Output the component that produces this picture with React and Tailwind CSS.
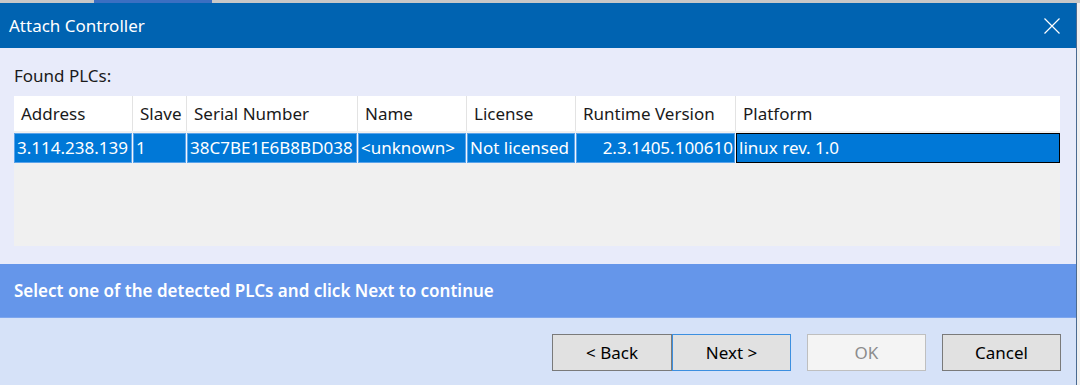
const COLS = [
  { key: "address", label: "Address", w: "w-[118px]" },
  { key: "slave", label: "Slave", w: "w-[53px]" },
  { key: "serial", label: "Serial Number", w: "w-[170px]" },
  { key: "name", label: "Name", w: "w-[108px]" },
  { key: "license", label: "License", w: "w-[108px]" },
  { key: "runtime", label: "Runtime Version", w: "w-[159px]", right: true },
  { key: "platform", label: "Platform", w: "flex-1" },
];

const ROW = {
  address: "3.114.238.139",
  slave: "1",
  serial: "38C7BE1E6B8BD038",
  name: "<unknown>",
  license: "Not licensed",
  runtime: "2.3.1405.100610",
  platform: "linux rev. 1.0",
};

function Button({ children, variant = "default", width = "w-[119px]" }) {
  const styles = {
    default: "bg-[#e1e1e1] border-[#7a7a7a] text-black",
    focus: "bg-[#e1e1e1] border-[#3c8fe0] text-black",
    disabled: "bg-[#f4f4f4] border-[#bfbfbf] text-[#8c8c8c]",
  };
  return (
    <button
      className={`${width} h-[37px] border text-[17px] flex items-center justify-center ${styles[variant]}`}
    >
      {children}
    </button>
  );
}

export default function App() {
  return (
    <div
      className="w-[1080px] h-[385px] bg-[#f0f0f0] overflow-hidden flex flex-col"
      style={{ fontFamily: '"Noto Sans", "Open Sans", sans-serif' }}
    >
      {/* strip of the window behind */}
      <div className="h-[3px] flex shrink-0 bg-[#c8c8c8]">
        <div className="w-[94px]" />
        <div className="w-[118px] bg-[#3b6fc2]" />
      </div>

      <div className="w-[1077px] flex-1 flex flex-col border-r border-[#4a6a90]">
        {/* Title bar */}
        <div className="h-[45px] bg-[#0063b1] flex items-center justify-between pl-[9px] pr-[16px] shrink-0">
          <span className="text-white text-[17px]">Attach Controller</span>
          <svg width="16" height="16" viewBox="0 0 16 16" className="text-white">
            <path d="M0.5 0.5L15.5 15.5M15.5 0.5L0.5 15.5" stroke="currentColor" strokeWidth="1.2" />
          </svg>
        </div>

        {/* Body */}
        <div className="bg-[#e8ebfa] px-[14px] pt-[17px] pb-[18px] pr-[16px] shrink-0">
          <div className="text-[17px] text-[#1a1a1a] leading-[22px] mb-[9px]">Found PLCs:</div>
          <div className="h-[150px] bg-[#f0f0f0] flex flex-col">
            <div className="h-[35px] flex gap-px bg-[#e3e3e3]">
              {COLS.map((c) => (
                <div
                  key={c.key}
                  className={`${c.w} bg-white flex items-center pl-[7px] text-[17px] text-[#1a1a1a] whitespace-nowrap`}
                >
                  {c.label}
                </div>
              ))}
            </div>
            <div className="h-[2px] bg-[#f0f0f0]" />
            <div className="h-[30px] flex gap-px bg-[#f3f6fb]">
              {COLS.map((c) => (
                <div
                  key={c.key}
                  className={`${c.w} ${
                    c.key === "platform" ? "border-black" : "border-[#5aa3ea]"
                  } bg-[#0078d7] border flex items-center text-[17px] text-white whitespace-nowrap overflow-hidden ${
                    c.right ? "justify-end pr-px" : "pl-[2px]"
                  }`}
                >
                  {ROW[c.key]}
                </div>
              ))}
            </div>
          </div>
        </div>

        {/* Hint banner */}
        <div className="h-[54px] bg-[#6596ea] flex items-center px-[14px] shrink-0 border-b border-[#7da6ee]">
          <span className="text-white text-[17px] font-semibold">
            Select one of the detected PLCs and click Next to continue
          </span>
        </div>

        {/* Buttons */}
        <div className="flex-1 bg-[#d6e2f8] flex items-start justify-end pt-[16px] pr-[15px]">
          <Button width="w-[120px]">&lt; Back</Button>
          <Button variant="focus">Next &gt;</Button>
          <div className="ml-[16px]">
            <Button variant="disabled">OK</Button>
          </div>
          <div className="ml-[16px]">
            <Button>Cancel</Button>
          </div>
        </div>
      </div>
    </div>
  );
}
